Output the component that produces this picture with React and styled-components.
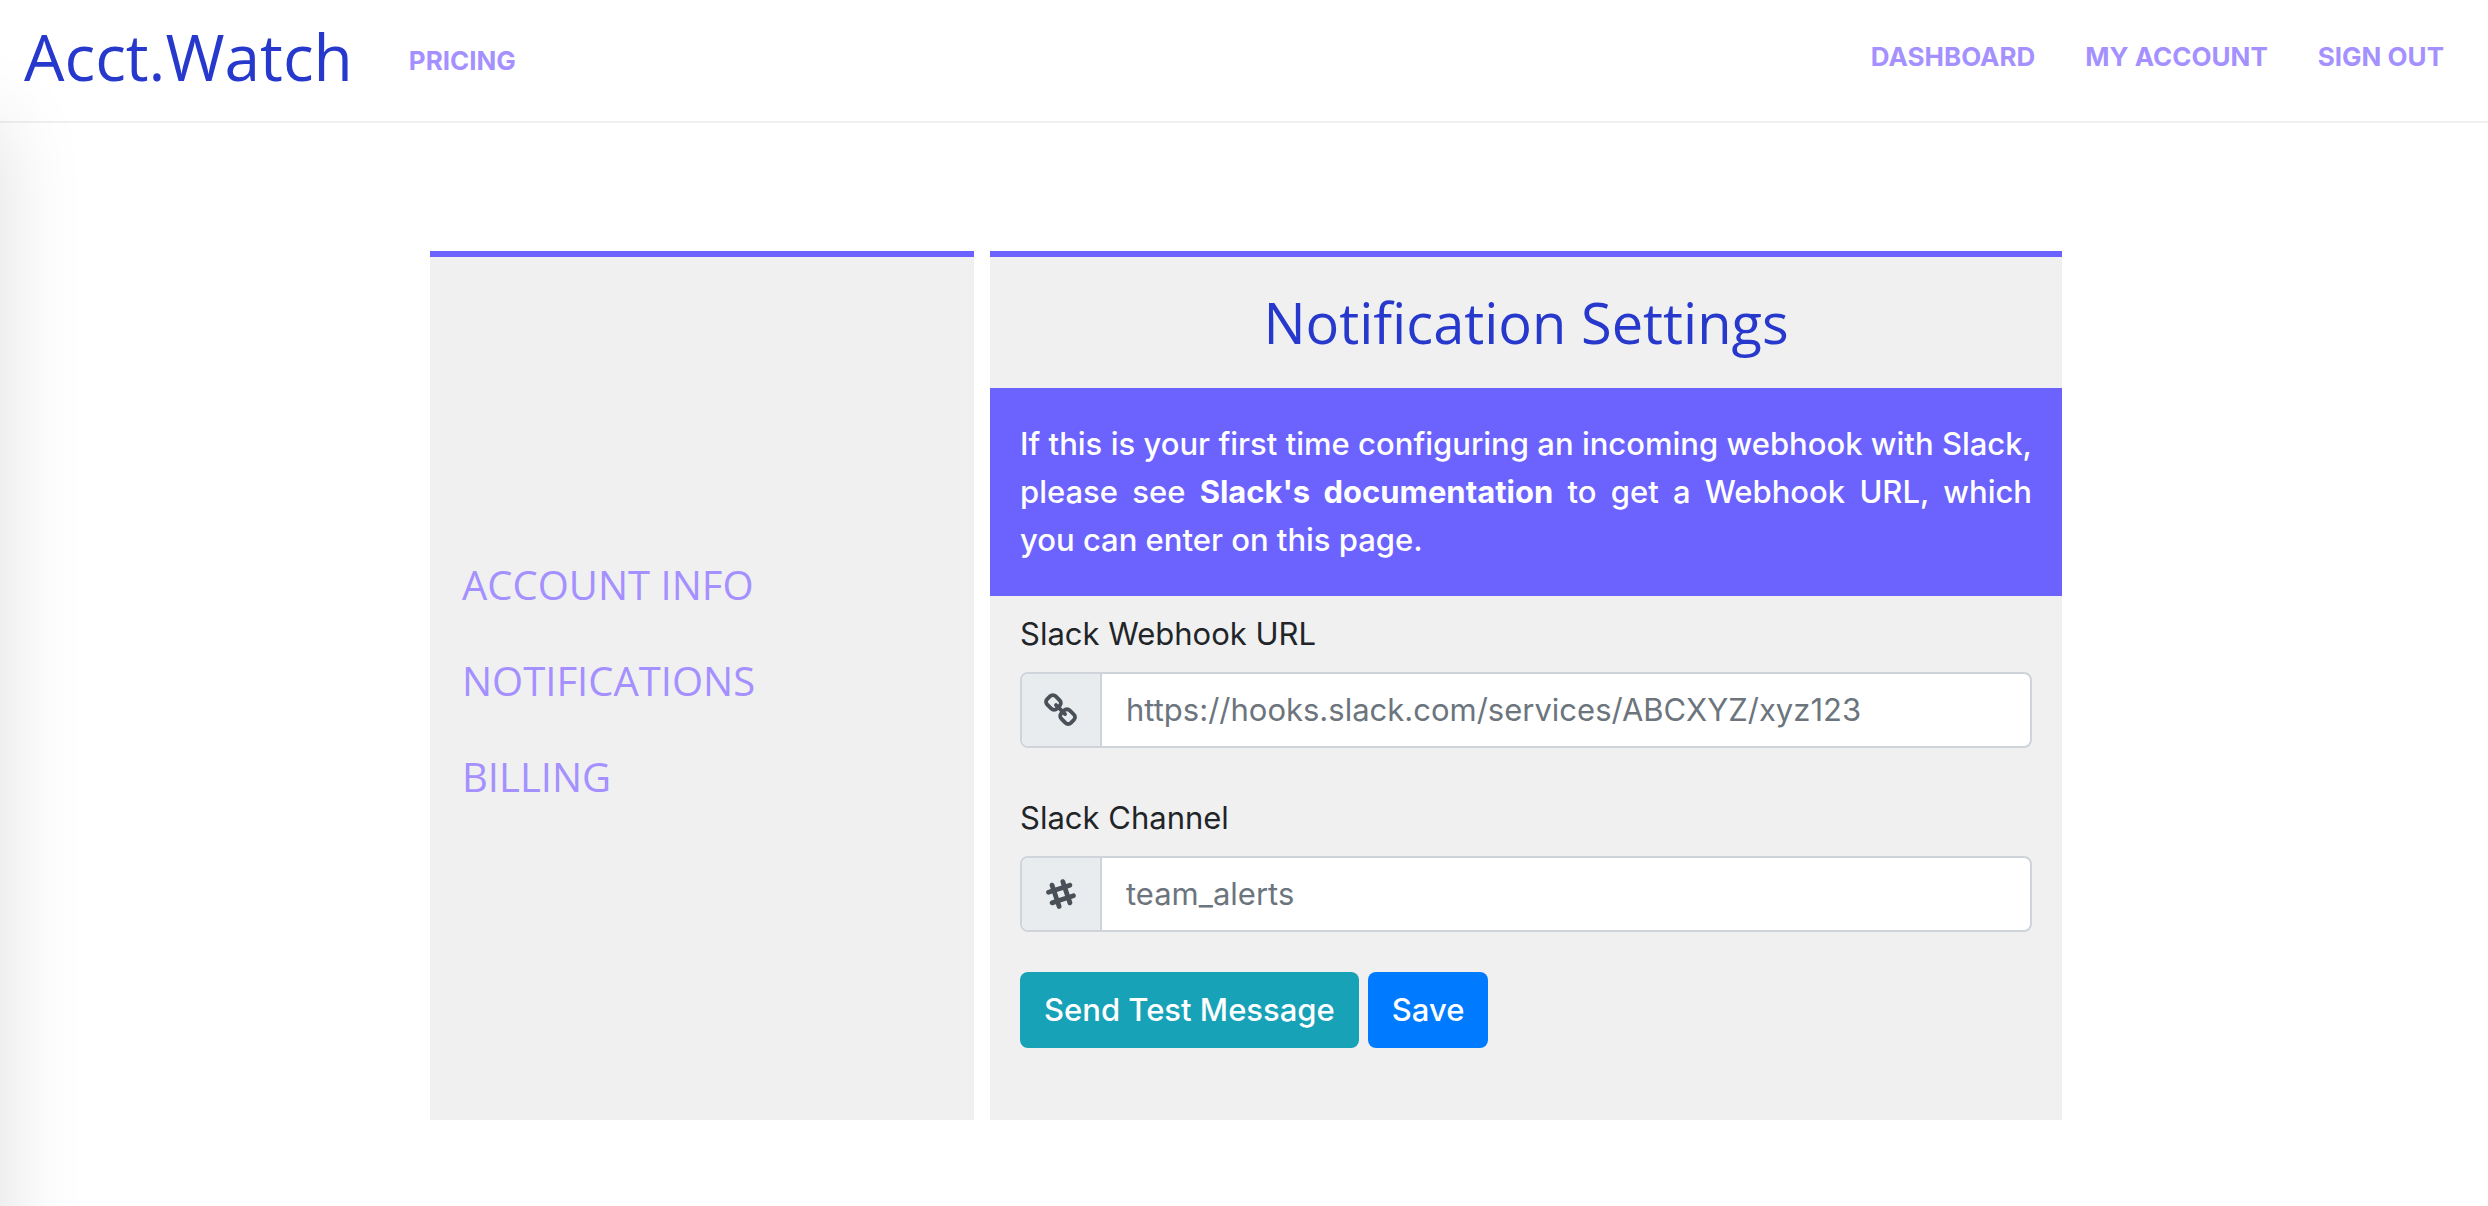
import React from 'react'
import styled, { createGlobalStyle, ThemeProvider } from 'styled-components'
import { FaSlackHash } from 'react-icons/fa'

const theme = {
  color: {
    primary: '#6c63ff',
    heading: '#2738cc',
    link: '#a491ff',
    panel: '#f0f0f0',
    text: '#212529',
    muted: '#6c757d',
    border: '#ced4da',
    addon: '#e9ecef',
    icon: '#495057',
    info: '#17a2b8',
    save: '#007bff',
  },
  font: {
    body: "Inter, 'Liberation Sans', sans-serif",
    heading: "'Open Sans', 'Noto Sans', sans-serif",
  },
}

const GlobalStyle = createGlobalStyle`
  *, *::before, *::after {
    box-sizing: border-box;
  }

  body {
    margin: 0;
    background: #fff;
    color: ${theme.color.text};
    font-family: ${theme.font.body};
    font-size: 31px;
    line-height: 48px;
  }
`

const Navbar = styled.nav`
  display: flex;
  align-items: flex-start;
  padding: 9px 44px 16px 24px;
  border-bottom: 2px solid ${({ theme }) => theme.color.panel};
`

const Brand = styled.a`
  margin-right: 56px;
  color: ${({ theme }) => theme.color.heading};
  font-family: ${({ theme }) => theme.font.heading};
  font-size: 64px;
  line-height: 96px;
  text-decoration: none;
`

const NavLinks = styled.div`
  display: flex;
  gap: 50px;
  padding-top: ${({ $top }) => $top}px;
  margin-left: ${({ $right }) => ($right ? 'auto' : 0)};
`

const NavLink = styled.a`
  color: ${({ theme }) => theme.color.link};
  font-size: 26px;
  font-weight: 700;
  text-decoration: none;
  text-transform: uppercase;
`

// closed drawer, only its shadow reaches into the page
const Drawer = styled.aside`
  position: fixed;
  top: 123px;
  bottom: -160px;
  left: -400px;
  width: 400px;
  box-shadow: 0 0 80px rgba(0, 0, 0, 0.13);
  pointer-events: none;
`

const Settings = styled.main`
  display: grid;
  grid-template-columns: 544fr 1072fr;
  gap: 16px;
  max-width: 1636px;
  margin: 128px auto 0;
  padding-left: 4px;
`

const Panel = styled.section`
  display: flex;
  flex-direction: column;
  border-top: 6px solid ${({ theme }) => theme.color.primary};
  background: ${({ theme }) => theme.color.panel};
`

const SideMenu = styled.ul`
  display: flex;
  flex-direction: column;
  gap: 36px;
  margin: auto 0;
  padding: 0 32px 16px;
  list-style: none;
`

const SideLink = styled.a`
  display: block;
  color: ${({ theme }) => theme.color.link};
  font-family: ${({ theme }) => theme.font.heading};
  font-size: 40px;
  line-height: 60px;
  text-decoration: none;
  text-transform: uppercase;
`

const Title = styled.h1`
  margin: 0;
  padding: 32px 0;
  color: ${({ theme }) => theme.color.heading};
  font-family: ${({ theme }) => theme.font.heading};
  font-size: 56px;
  font-weight: 400;
  line-height: 67px;
  text-align: center;
`

const Notice = styled.p`
  margin: 0;
  padding: 32px 30px;
  background: ${({ theme }) => theme.color.primary};
  color: #fff;
  font-weight: 500;
  text-align: justify;

  a {
    color: inherit;
    font-weight: 700;
    text-decoration: none;
  }
`

const Form = styled.form`
  padding: 14px 30px 72px;
`

const Field = styled.div`
  display: flex;
  flex-direction: column;
  gap: 14px;
  margin-bottom: ${({ $last }) => ($last ? 40 : 46)}px;
`

const InputGroup = styled.div`
  display: flex;
  height: 76px;
  border: 2px solid ${({ theme }) => theme.color.border};
  border-radius: 8px;
  background: #fff;
  overflow: hidden;
`

const Addon = styled.span`
  display: flex;
  flex: none;
  align-items: center;
  justify-content: center;
  width: 80px;
  border-right: 2px solid ${({ theme }) => theme.color.border};
  background: ${({ theme }) => theme.color.addon};
  color: ${({ theme }) => theme.color.icon};
`

const Input = styled.input`
  flex: 1;
  min-width: 0;
  padding: 0 24px;
  border: 0;
  outline: 0;
  background: transparent;
  color: ${({ theme }) => theme.color.icon};
  font: inherit;

  &::placeholder {
    color: ${({ theme }) => theme.color.muted};
    opacity: 1;
  }
`

const Actions = styled.div`
  display: flex;
  gap: 9px;
`

const Button = styled.button`
  height: 76px;
  padding: 0 24px;
  border: 0;
  border-radius: 8px;
  background: ${({ theme, $variant }) => theme.color[$variant]};
  color: #fff;
  font: inherit;
  font-weight: 500;
  cursor: pointer;
`

const LinkIcon = () => (
  <svg width="36" height="36" viewBox="-40 -40 1792 1792" fill="currentColor" aria-hidden="true">
    <path d="M1456 1216q0-40-28-68l-208-208q-28-28-68-28-42 0-72 32 3 3 19 18.5t21.5 21.5 15 19 13 25.5 3.5 27.5q0 40-28 68t-68 28q-15 0-27.5-3.5t-25.5-13-19-15-21.5-21.5-18.5-19q-33 31-33 73 0 40 28 68l206 207q27 27 68 27 40 0 68-26l147-146q28-28 28-67zm-703-705q0-40-28-68l-206-207q-28-28-68-28-39 0-68 27l-147 146q-28 28-28 67 0 40 28 68l208 208q27 27 68 27 42 0 72-31-3-3-19-18.5t-21.5-21.5-15-19-13-25.5-3.5-27.5q0-40 28-68t68-28q15 0 27.5 3.5t25.5 13 19 15 21.5 21.5 18.5 19q33-31 33-73zm895 705q0 120-85 203l-147 146q-83 83-203 83-121 0-204-85l-206-207q-83-83-83-203 0-123 88-209l-88-88q-86 88-208 88-120 0-204-84l-208-208q-84-84-84-204t85-203l147-146q83-83 203-83 121 0 204 85l206 207q83 83 83 203 0 123-88 209l88 88q86-88 208-88 120 0 204 84l208 208q84 84 84 204z" />
  </svg>
)

export default function App() {
  return (
    <ThemeProvider theme={theme}>
      <GlobalStyle />
      <Navbar>
        <Brand href="#home">Acct.Watch</Brand>
        <NavLinks $top={28}>
          <NavLink href="#pricing">Pricing</NavLink>
        </NavLinks>
        <NavLinks $top={24} $right>
          <NavLink href="#dashboard">Dashboard</NavLink>
          <NavLink href="#account">My Account</NavLink>
          <NavLink href="#signout">Sign Out</NavLink>
        </NavLinks>
      </Navbar>
      <Drawer />
      <Settings>
        <Panel>
          <SideMenu>
            <li><SideLink href="#info">Account Info</SideLink></li>
            <li><SideLink href="#notifications">Notifications</SideLink></li>
            <li><SideLink href="#billing">Billing</SideLink></li>
          </SideMenu>
        </Panel>
        <Panel>
          <Title>Notification Settings</Title>
          <Notice>
            If this is your first time configuring an incoming webhook with Slack, please see{' '}
            <a href="#docs">Slack's documentation</a> to get a Webhook URL, which you can enter on
            this page.
          </Notice>
          <Form onSubmit={e => e.preventDefault()}>
            <Field>
              <label htmlFor="webhook">Slack Webhook URL</label>
              <InputGroup>
                <Addon><LinkIcon /></Addon>
                <Input
                  id="webhook"
                  type="text"
                  placeholder="https://hooks.slack.com/services/ABCXYZ/xyz123"
                />
              </InputGroup>
            </Field>
            <Field $last>
              <label htmlFor="channel">Slack Channel</label>
              <InputGroup>
                <Addon><FaSlackHash size={34} aria-hidden="true" /></Addon>
                <Input id="channel" type="text" placeholder="team_alerts" />
              </InputGroup>
            </Field>
            <Actions>
              <Button type="button" $variant="info">Send Test Message</Button>
              <Button type="submit" $variant="save">Save</Button>
            </Actions>
          </Form>
        </Panel>
      </Settings>
    </ThemeProvider>
  )
}
